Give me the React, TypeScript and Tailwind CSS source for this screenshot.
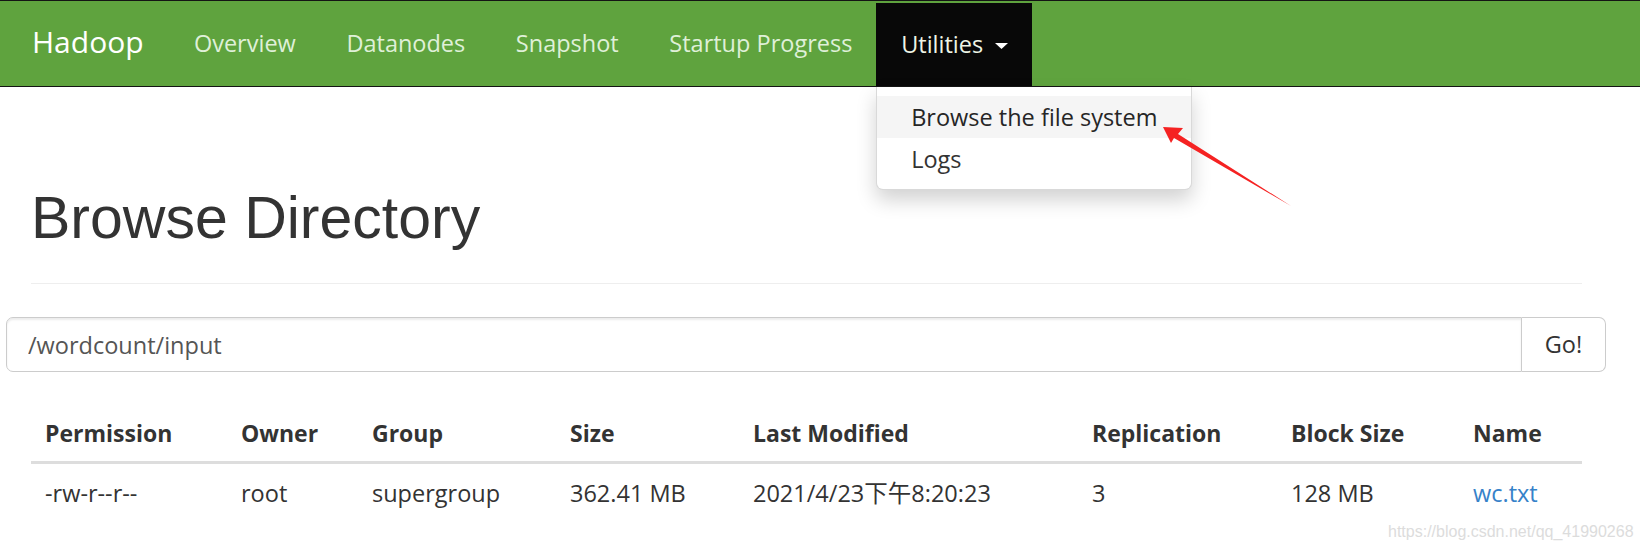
import React from 'react'

const sans = "font-['Open_Sans','Noto_Sans_CJK_SC',sans-serif]"

const navLinks = ['Overview', 'Datanodes', 'Snapshot', 'Startup Progress']

const columns = [
  { label: 'Permission', width: 'w-[196px]' },
  { label: 'Owner', width: 'w-[131px]' },
  { label: 'Group', width: 'w-[198px]' },
  { label: 'Size', width: 'w-[183px]' },
  { label: 'Last Modified', width: 'w-[339px]' },
  { label: 'Replication', width: 'w-[199px]' },
  { label: 'Block Size', width: 'w-[182px]' },
  { label: 'Name', width: 'w-[123px]' },
]

const files = [
  {
    permission: '-rw-r--r--',
    owner: 'root',
    group: 'supergroup',
    size: '362.41 MB',
    modified: '2021/4/23下午8:20:23',
    replication: '3',
    blockSize: '128 MB',
    name: 'wc.txt',
  },
]

function Navbar() {
  return (
    <nav className="flex h-[87px] items-stretch border-y border-[#141414] bg-[#5fa33e]">
      <a className="flex items-center pb-[4px] pl-[32px] pr-[25px] text-[30px] leading-[32px] text-white">
        Hadoop
      </a>
      <ul className="flex items-stretch">
        {navLinks.map((link) => (
          <li key={link} className="flex items-center px-[25.3px] text-[23.5px] leading-[35px] text-[#dff0d8]">
            {link}
          </li>
        ))}
        {/* open dropdown */}
        <li className="relative mt-[2px] -ml-[1.5px] flex w-[156px] items-center bg-[#080808] pl-[25px] text-[23.5px] leading-[35px] text-[#eef5e6]">
          Utilities
          <svg className="ml-[12px] mt-[3px]" width="13" height="6" viewBox="0 0 13 6">
            <polygon points="0,0 13,0 6.5,6" fill="#ffffff" />
          </svg>
          <div className="absolute left-0 top-[calc(100%+1px)] z-10 w-[316px] whitespace-nowrap rounded-b-[7px] border border-t-0 border-[rgba(0,0,0,0.15)] bg-white py-[9px] shadow-[0_10px_20px_rgba(0,0,0,0.18)]">
            <div className="bg-[#f5f5f5] px-[34px] leading-[42px] text-[#262626]">Browse the file system</div>
            <div className="px-[34px] leading-[42px] text-[#333]">Logs</div>
          </div>
        </li>
      </ul>
    </nav>
  )
}

function FileTable() {
  return (
    <table className="mt-[26px] ml-[31px] w-[1551px] table-fixed border-collapse text-left text-[#333]">
      <thead>
        <tr className="border-b-[3.5px] border-[#ddd]">
          {columns.map((col) => (
            <th key={col.label} className={`${col.width} pl-[14px] pt-[18px] pb-[10px] text-[23px] font-bold leading-[35px]`}>
              {col.label}
            </th>
          ))}
        </tr>
      </thead>
      <tbody>
        {files.map((f) => (
          <tr key={f.name} className="text-[23.5px] leading-[35px]">
            <td className="pl-[14px] pt-[12px] pb-[16px]">{f.permission}</td>
            <td className="pl-[14px] pt-[12px] pb-[16px]">{f.owner}</td>
            <td className="pl-[14px] pt-[12px] pb-[16px]">{f.group}</td>
            <td className="pl-[14px] pt-[12px] pb-[16px]">{f.size}</td>
            <td className="pl-[14px] pt-[12px] pb-[16px]">{f.modified}</td>
            <td className="pl-[14px] pt-[12px] pb-[16px]">{f.replication}</td>
            <td className="pl-[14px] pt-[12px] pb-[16px]">{f.blockSize}</td>
            <td className="pl-[14px] pt-[12px] pb-[16px]">
              <a className="text-[#3682c9]">{f.name}</a>
            </td>
          </tr>
        ))}
      </tbody>
    </table>
  )
}

export default function App() {
  return (
    <div className={`relative h-[549px] w-[1640px] overflow-hidden bg-white ${sans}`}>
      <Navbar />

      <div className="ml-[31px] w-[1551px]">
        <h1 className="mt-[99px] font-['Liberation_Sans',Arial,sans-serif] text-[59px] leading-[65px] text-[#333]">
          Browse Directory
        </h1>
        <hr className="mt-[32px] border-t border-[#eee]" />
      </div>

      {/* path box */}
      <div className="mt-[33px] ml-[6px] flex h-[55px] w-[1600px]">
        <input
          defaultValue="/wordcount/input"
          className="h-full flex-1 rounded-l-[7px] border border-[#ccc] px-[21px] text-[23.5px] text-[#555] shadow-[inset_0_2px_2px_rgba(0,0,0,0.075)] outline-none"
        />
        <button className="h-full w-[84px] rounded-r-[7px] border border-l-0 border-[#ccc] bg-white text-[23.5px] text-[#333]">
          Go!
        </button>
      </div>

      <FileTable />

      {/* red pointer drawn on top of the page */}
      <svg className="pointer-events-none absolute left-0 top-0 z-20" width="1640" height="549" viewBox="0 0 1640 549">
        <polygon
          points="1163,127 1183,128 1178,134 1291,206 1174,138 1171,143"
          fill="#f52222"
        />
      </svg>

      <div className="absolute left-[1388px] top-[523px] font-['Liberation_Sans',Arial,sans-serif] text-[16px] leading-[18px] text-[#dcdcdc]">
        https://blog.csdn.net/qq_41990268
      </div>
    </div>
  )
}
